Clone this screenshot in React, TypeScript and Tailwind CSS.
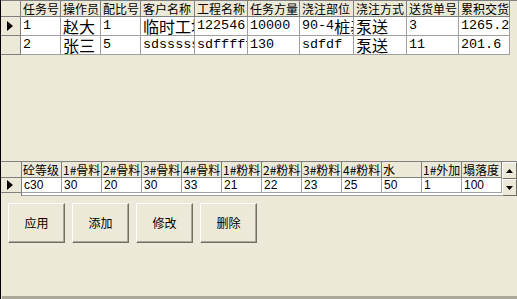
import { ReactNode } from 'react';

const topColumns = [
  { title: '任务号', width: 40 },
  { title: '操作员', width: 40 },
  { title: '配比号', width: 40 },
  { title: '客户名称', width: 54 },
  { title: '工程名称', width: 53 },
  { title: '任务方量', width: 52 },
  { title: '浇注部位', width: 54 },
  { title: '浇注方式', width: 53 },
  { title: '送货单号', width: 52 },
  { title: '累积交货', width: 51 },
];

const topRows = [
  ['1', '赵大', '1', '临时工地', '122546', '10000', '90-4桩基', '泵送', '3', '1265.2'],
  ['2', '张三', '5', 'sdssssss', 'sdffffff', '130', 'sdfdf', '泵送', '11', '201.6'],
];

const mixColumns = ['砼等级', '1#骨料', '2#骨料', '3#骨料', '4#骨料', '1#粉料', '2#粉料', '3#粉料', '4#粉料', '水', '1#外加', '塌落度'];
const mixRow = ['c30', '30', '20', '30', '33', '21', '22', '23', '25', '50', '1', '100'];

const actions = ['应用', '添加', '修改', '删除'];

// split into cjk / latin runs so each gets its own size, like the old SimSun grid
function CellText({ text }: { text: string }) {
  const runs = text.match(/[\u4e00-\u9fff]+|[^\u4e00-\u9fff]+/g) ?? [];
  return (
    <>
      {runs.map((run, i) =>
        /[\u4e00-\u9fff]/.test(run) ? (
          <span key={i} className="text-[16px] font-['Noto_Sans_CJK_SC',sans-serif]">{run}</span>
        ) : (
          <span key={i} className="text-[13.4px] font-['Liberation_Mono',monospace]">{run}</span>
        )
      )}
    </>
  );
}

function Pointer() {
  return (
    <svg width="6" height="10" viewBox="0 0 6 10" className="ml-[6px]">
      <polygon points="0,0 6,5 0,10" fill="#000" />
    </svg>
  );
}

function Indicator({ children, className }: { children?: ReactNode; className: string }) {
  return (
    <div className={`flex shrink-0 items-center border-r border-b border-[#808080] bg-[#ECE9D8] ${className}`}>
      {children}
    </div>
  );
}

function ScrollButton({ up }: { up: boolean }) {
  return (
    <div className="flex h-[17px] w-[15px] items-center justify-center border border-t-white border-l-white border-r-[#716F64] border-b-[#716F64] bg-[#ECE9D8]">
      <svg width="7" height="4" viewBox="0 0 7 4">
        <polygon points={up ? '0,4 3.5,0 7,4' : '0,0 3.5,4 7,0'} fill="#000" />
      </svg>
    </div>
  );
}

export default function App() {
  return (
    <div className="flex h-[299px] w-[517px] flex-col overflow-hidden border-l border-black bg-[#ECE9D8] text-black">
      {/* task grid */}
      <div className="flex h-[161px] shrink-0 flex-col">
        <div className="flex h-[17px] border-t border-[#808080]">
          <Indicator className="w-[20px]" />
          {topColumns.map((col) => (
            <div
              key={col.title}
              style={{ width: col.width }}
              className="flex shrink-0 items-center overflow-hidden whitespace-nowrap border-r border-b border-[#808080] pl-[2px] font-['Noto_Sans_CJK_SC',sans-serif] text-[12px] leading-none"
            >
              {col.title}
            </div>
          ))}
        </div>
        {topRows.map((row, r) => (
          <div key={r} className="flex h-[19px]">
            <Indicator className="w-[20px]">{r === 0 ? <Pointer /> : null}</Indicator>
            {row.map((value, c) => (
              <div
                key={c}
                style={{ width: topColumns[c].width }}
                className="flex shrink-0 items-center overflow-hidden whitespace-nowrap border-r border-b border-[#A0A0A0] bg-white pl-[2px] leading-none"
              >
                <CellText text={value} />
              </div>
            ))}
          </div>
        ))}
      </div>

      {/* mix grid */}
      <div className="flex h-[35px] shrink-0 border-t border-[#808080]">
        <div className="flex flex-1 flex-col">
          <div className="flex h-[16px]">
            <Indicator className="w-[21px]" />
            {mixColumns.map((title) => (
              <div
                key={title}
                className="flex w-[40px] shrink-0 items-center overflow-hidden whitespace-nowrap border-r border-b border-[#808080] pl-[1px] font-['Noto_Sans_CJK_SC',sans-serif] text-[12px] leading-none"
              >
                {title}
              </div>
            ))}
          </div>
          <div className="flex h-[15px]">
            <Indicator className="w-[21px]">
              <Pointer />
            </Indicator>
            {mixRow.map((value, i) => (
              <div
                key={i}
                className="flex w-[40px] shrink-0 items-center overflow-hidden border-r border-b border-[#A0A0A0] bg-white pl-[2px] font-['Liberation_Sans',sans-serif] text-[12px] leading-none"
              >
                {value}
              </div>
            ))}
          </div>
          <div className="flex h-[3px]">
            <div className="w-[21px] shrink-0 border-r border-[#808080] bg-[#ECE9D8]" />
            <div className="flex-1 border-b border-[#A0A0A0] bg-white" />
          </div>
        </div>
        <div className="flex w-[15px] shrink-0 flex-col">
          <ScrollButton up />
          <ScrollButton up={false} />
        </div>
      </div>

      {/* actions */}
      <div className="flex flex-1 flex-col">
        <div className="flex gap-[7px] pl-[7px] pt-[7px]">
          {actions.map((label) => (
            <button
              key={label}
              className="flex h-[40px] w-[57px] items-center justify-center border border-t-white border-l-white border-r-[#716F64] border-b-[#716F64] bg-[#ECE9D8] font-['Noto_Sans_CJK_SC',sans-serif] text-[12px] shadow-[inset_-1px_-1px_0_#ACA899]"
            >
              {label}
            </button>
          ))}
        </div>
      </div>
      <div className="ml-[1px] h-[3px] shrink-0 bg-[#ACA899]" />
    </div>
  );
}
